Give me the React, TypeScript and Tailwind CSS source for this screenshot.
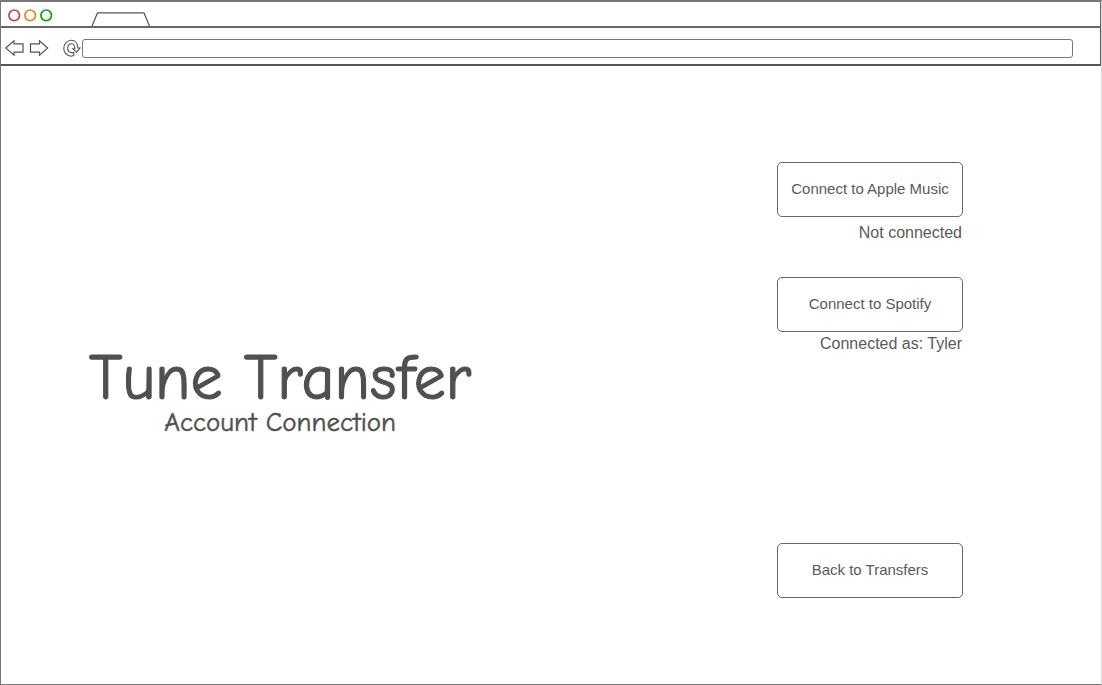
import React from "react";

function WindowDots() {
  return (
    <svg width="46" height="14" viewBox="0 0 46 14" fill="none" strokeWidth="1.7" aria-hidden="true">
      <circle cx="7.2" cy="7.3" r="5.3" stroke="#bf4b4b" />
      <circle cx="23.2" cy="7.3" r="5.3" stroke="#de8a22" />
      <circle cx="39.2" cy="7.3" r="5.3" stroke="#0aa30a" />
    </svg>
  );
}

function TabOutline() {
  return (
    <svg width="60" height="14" viewBox="0 0 60 14" fill="none" stroke="#555" strokeWidth="1.2" aria-hidden="true">
      <path d="M1 14 L6.5 .9 H53 L58.5 14" />
    </svg>
  );
}

const iconProps = { fill: "none", stroke: "#555", strokeWidth: 1.2, "aria-hidden": true } as const;

function ActionButton({ children }: { children: React.ReactNode }) {
  return (
    <button type="button" className="h-[55px] w-full rounded-[5px] border border-[#666] bg-white text-[15px] text-[#5a5a5a]">
      {children}
    </button>
  );
}

export default function App() {
  return (
    <div className="flex min-h-screen flex-col border border-t-2 border-[#777] border-r-[#ddd] bg-white font-['Liberation_Sans',Arial,sans-serif] text-[#5a5a5a]">
      <header>
        <div className="flex h-[26px] items-end gap-[38px] border-r border-b-2 border-[#666] pl-1.5">
          <div className="pb-1">
            <WindowDots />
          </div>
          <TabOutline />
        </div>
        <div className="flex h-[38px] items-center border-r border-b-2 border-[#555] pt-1 pr-[27px] pl-1">
          <button type="button" aria-label="Back">
            <svg width="20" height="16" viewBox="0 0 20 16" {...iconProps}>
              <path d="M.8 8 L9 .8 V3.8 H18 V12.2 H9 V15.2 Z" />
            </svg>
          </button>
          <button type="button" aria-label="Forward" className="ml-1">
            <svg width="20" height="16" viewBox="0 0 20 16" {...iconProps}>
              <path d="M18.7 8 L10.5 .8 V3.8 H1.5 V12.2 H10.5 V15.2 Z" />
            </svg>
          </button>
          <button type="button" aria-label="Reload" className="ml-3.5">
            <svg width="19" height="18" viewBox="0 0 19 18" {...iconProps} strokeWidth={1.1}>
              <path d="M7.6 17.2 C3.2 16.2 .8 13.4 .8 9.6 C.8 4.6 4.2 1.2 8.4 1.2 C12.2 1.2 14.8 4.4 14.8 9 H17 L13.6 13.2 L9.8 9.8 H11.9 C11.9 6.4 10.6 4.7 8.4 4.7 C6 4.7 4.7 6.8 4.7 9.6 C4.7 12 5.8 13.3 8.2 13.6 L10.8 13.5 V16.6 Z" />
            </svg>
          </button>
          <input
            type="text"
            aria-label="Address"
            className="h-[19px] min-w-0 flex-1 rounded-[3px] border border-[#777] px-2 text-xs outline-none"
          />
        </div>
      </header>
      <main className="flex flex-1 items-start justify-between pt-24 pr-[138px] pb-[86px] pl-[88px]">
        <div className="self-center pt-6 text-center font-['Comic_Sans_MS','Comic_Neue','Noto_Sans',cursive] text-[#505050]">
          <h1 className="text-[64px] leading-[62px] [-webkit-text-stroke:1.2px_#505050]">Tune Transfer</h1>
          <p className="text-[27px] leading-7 [-webkit-text-stroke:0.5px_#505050]">Account Connection</p>
        </div>
        <div className="flex w-[186px] flex-col self-stretch">
          <section>
            <ActionButton>Connect to Apple Music</ActionButton>
            <p className="mt-1 pr-px text-right text-base">Not connected</p>
          </section>
          <section className="mt-8">
            <ActionButton>Connect to Spotify</ActionButton>
            <p className="pr-px text-right text-base">Connected as: Tyler</p>
          </section>
          <div className="mt-auto">
            <ActionButton>Back to Transfers</ActionButton>
          </div>
        </div>
      </main>
    </div>
  );
}
